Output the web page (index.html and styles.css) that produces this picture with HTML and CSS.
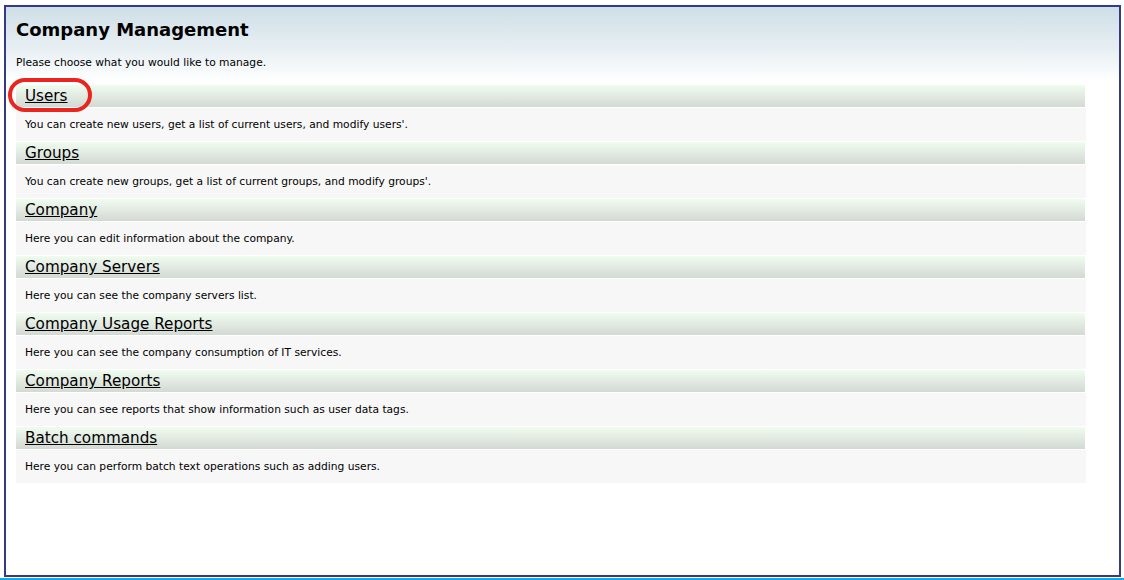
FILE: index.html
```html
<!DOCTYPE html>
<html>
<head>
<meta charset="utf-8">
<title>Company Management</title>
<link rel="stylesheet" href="styles.css">
</head>
<body>
<div class="frame">
  <h1 class="title">Company Management</h1>
  <p class="intro">Please choose what you would like to manage.</p>
  <div class="sections">
    <div class="section">
      <div class="sec-head"><a href="#" class="sec-link">Users</a><span class="highlight"></span></div>
      <div class="sec-desc">You can create new users, get a list of current users, and modify users'.</div>
    </div>
    <div class="section">
      <div class="sec-head"><a href="#" class="sec-link">Groups</a></div>
      <div class="sec-desc">You can create new groups, get a list of current groups, and modify groups'.</div>
    </div>
    <div class="section">
      <div class="sec-head"><a href="#" class="sec-link">Company</a></div>
      <div class="sec-desc">Here you can edit information about the company.</div>
    </div>
    <div class="section">
      <div class="sec-head"><a href="#" class="sec-link">Company Servers</a></div>
      <div class="sec-desc">Here you can see the company servers list.</div>
    </div>
    <div class="section">
      <div class="sec-head"><a href="#" class="sec-link">Company Usage Reports</a></div>
      <div class="sec-desc">Here you can see the company consumption of IT services.</div>
    </div>
    <div class="section">
      <div class="sec-head"><a href="#" class="sec-link">Company Reports</a></div>
      <div class="sec-desc">Here you can see reports that show information such as user data tags.</div>
    </div>
    <div class="section">
      <div class="sec-head"><a href="#" class="sec-link">Batch commands</a></div>
      <div class="sec-desc">Here you can perform batch text operations such as adding users.</div>
    </div>
  </div>
</div>
<div class="bottom-bar"></div>
</body>
</html>
```
FILE: styles.css
```css
html, body {
  margin: 0;
  padding: 0;
  background: #ffffff;
}
body {
  padding: 5px 3px 0 4px;
  font-family: "DejaVu Sans", Verdana, sans-serif;
  color: #000;
}
.frame {
  box-sizing: border-box;
  height: 572px;
  border: 2px solid #343a84;
  background: linear-gradient(to bottom, #cfdfe7 0px, #e6eef2 40px, #ffffff 75px, #ffffff 100%);
  padding: 0 34px 0 10px;
}
.title {
  margin: 0;
  padding-top: 12px;
  font-size: 18px;
  line-height: 22px;
  font-weight: bold;
}
.intro {
  margin: 15px 0 0 0;
  font-size: 10.7px;
  line-height: 14px;
}
.sections {
  margin-top: 15px;
  display: flex;
  flex-direction: column;
}
.section {
  margin-bottom: 1px;
}
.sec-head {
  position: relative;
  height: 22px;
  background: linear-gradient(to bottom, #f0fcef 0%, #e2eae2 50%, #d3d9d3 100%);
  padding-left: 9px;
  display: flex;
  align-items: center;
}
.sec-link {
  font-size: 15.2px;
  line-height: 20px;
  color: #000;
  text-decoration: underline;
}
.sec-desc {
  margin-top: 1px;
  height: 33px;
  background: #f7f7f7;
  padding-left: 9px;
  display: flex;
  align-items: center;
  font-size: 10.7px;
  line-height: 14px;
  margin-right: -1px;
}
.highlight {
  position: absolute;
  left: -8px;
  top: -7px;
  width: 76px;
  height: 26px;
  border: 4px solid #e8251f;
  border-radius: 17px;
  pointer-events: none;
}
.bottom-bar {
  margin-top: 1px;
  height: 3px;
  background: #19a8e6;
  margin-left: -4px;
  margin-right: -3px;
}
```
